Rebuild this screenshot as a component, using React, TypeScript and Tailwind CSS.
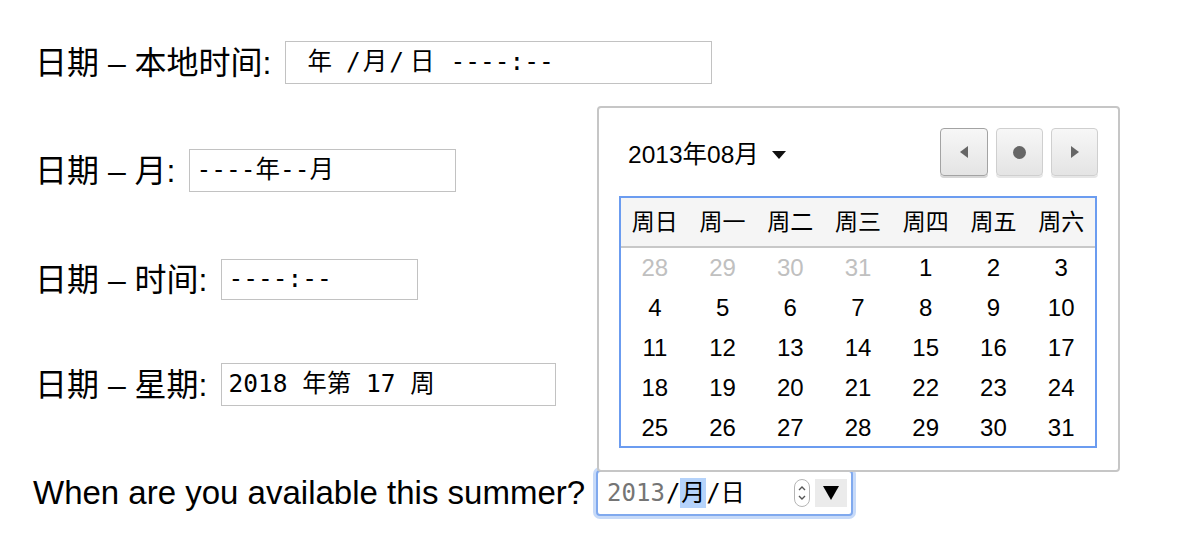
import React from 'react';

const sans = '"Liberation Sans", "Noto Sans CJK SC", sans-serif';
const mono = '"DejaVu Sans Mono", "Noto Sans CJK SC", monospace';

const weekDays = ['周日', '周一', '周二', '周三', '周四', '周五', '周六'];

const days: { n: number; muted?: boolean }[] = [
  { n: 28, muted: true },
  { n: 29, muted: true },
  { n: 30, muted: true },
  { n: 31, muted: true },
  ...Array.from({ length: 31 }, (_, i) => ({ n: i + 1 })),
];

function Field({
  className,
  children,
}: {
  className: string;
  children: React.ReactNode;
}) {
  return (
    <div
      className={`flex items-center border border-[#c2c2c2] bg-white text-[24.5px] text-black ${className}`}
      style={{ fontFamily: mono }}
    >
      {children}
    </div>
  );
}

function NavButton({
  pressed,
  children,
  className,
}: {
  pressed?: boolean;
  children: React.ReactNode;
  className: string;
}) {
  return (
    <div
      className={`flex items-center justify-center h-[48px] rounded-[4px] border bg-gradient-to-b from-[#f7f7f7] to-[#e4e4e4] ${
        pressed
          ? 'border-[#a3a3a3] shadow-[0_2px_0_#d6d6d6]'
          : 'border-[#cfcfcf] shadow-[0_2px_0_#e6e6e6]'
      } ${className}`}
    >
      {children}
    </div>
  );
}

function Calendar() {
  return (
    <div className="absolute left-[597px] top-[106px] w-[523px] h-[366px] rounded-[4px] border-2 border-[#c6c6c6] bg-white">
      <div className="flex items-center justify-between pl-[29px] pr-[20px] pt-[20px]">
        <div className="flex items-center gap-[13px] pt-[6px] text-[24.5px] text-black">
          <span>2013年08月</span>
          <svg width="14" height="8" viewBox="0 0 14 8">
            <path d="M0 0h14L7 8z" fill="#111" />
          </svg>
        </div>
        <div className="flex gap-[8px]">
          <NavButton pressed className="w-[48px]">
            <svg width="8" height="12" viewBox="0 0 8 12">
              <path d="M8 0v12L0 6z" fill="#666" />
            </svg>
          </NavButton>
          <NavButton className="w-[47px]">
            <div className="w-[13px] h-[13px] rounded-full bg-[#666]" />
          </NavButton>
          <NavButton className="w-[47px]">
            <svg width="8" height="12" viewBox="0 0 8 12">
              <path d="M0 0v12l8-6z" fill="#666" />
            </svg>
          </NavButton>
        </div>
      </div>
      <div className="ml-[20px] mt-[20px] w-[478px] h-[252px] border-2 border-[#6b9cf0]">
        <div className="grid grid-cols-7 h-[50px] bg-[#f5f5f5] border-b-2 border-[#c8c8c8] text-[23px] text-black">
          {weekDays.map((d) => (
            <div key={d} className="flex items-center justify-center">
              {d}
            </div>
          ))}
        </div>
        <div className="grid grid-cols-7 text-[24px]">
          {days.map((d, i) => (
            <div
              key={i}
              className={`flex items-center justify-center h-[40px] ${
                d.muted ? 'text-[#c0c0c0]' : 'text-black'
              }`}
            >
              {d.n}
            </div>
          ))}
        </div>
      </div>
    </div>
  );
}

export default function App() {
  return (
    <div
      className="relative w-[1192px] h-[536px] overflow-hidden bg-white text-black"
      style={{ fontFamily: sans }}
    >
      <div className="pl-[35px] pt-[41px]">
        <div className="flex items-center h-[43px]">
          <span className="text-[32px] whitespace-pre">日期 – 本地时间:</span>
          <Field className="ml-[14px] w-[427px] h-[43px] pl-[21px]">
            <span>年</span>
            <span className="ml-[14px]">/</span>
            <span className="ml-[2px]">月</span>
            <span className="ml-[2px]">/</span>
            <span className="ml-[6px]">日</span>
            <span className="ml-[16px] whitespace-pre">----:--</span>
          </Field>
        </div>

        <div className="flex items-center h-[43px] mt-[65px]">
          <span className="text-[32px] whitespace-pre">日期 – 月:</span>
          <Field className="ml-[14px] w-[267px] h-[43px] pl-[6px]">
            <span className="whitespace-pre">----年--月</span>
          </Field>
        </div>

        <div className="flex items-center h-[41px] mt-[67px]">
          <span className="text-[32px] whitespace-pre">日期 – 时间:</span>
          <Field className="ml-[14px] w-[197px] h-[41px] pl-[6px]">
            <span className="whitespace-pre">----:--</span>
          </Field>
        </div>

        <div className="flex items-center h-[43px] mt-[63px]">
          <span className="text-[32px] whitespace-pre">日期 – 星期:</span>
          <Field className="ml-[14px] w-[335px] h-[43px] pl-[6px]">
            <span className="whitespace-pre">2018 年第 17 周</span>
          </Field>
        </div>

        <div className="flex items-center h-[46px] mt-[64px] -ml-[2px]">
          <span className="text-[33px] whitespace-pre">When are you available this summer?</span>
          <div
            className="ml-[11px] flex items-center w-[257px] h-[46px] rounded-[4px] border-2 border-[#80a9ee] shadow-[0_0_0_3px_#c7daf8] bg-white pl-[9px] pr-[4px] text-[24px]"
            style={{ fontFamily: mono }}
          >
            <span className="text-[#757575]">2013</span>
            <span className="ml-[1px]">/</span>
            <span className="bg-[#b5d3fb] px-[1px] leading-[30px]">月</span>
            <span>/</span>
            <span>日</span>
            <div className="ml-auto flex items-center gap-[5px]">
              <svg width="16" height="28" viewBox="0 0 16 28">
                <rect x="0.5" y="0.5" width="15" height="27" rx="7.5" fill="#fff" stroke="#b5b5b5" />
                <path d="M5 11l3-3 3 3" fill="none" stroke="#555" strokeWidth="1.4" />
                <path d="M5 17l3 3 3-3" fill="none" stroke="#555" strokeWidth="1.4" />
              </svg>
              <div className="flex items-center justify-center w-[32px] h-[28px] bg-[#ebebeb]">
                <svg width="16" height="14" viewBox="0 0 16 14">
                  <path d="M0 0h16L8 14z" fill="#000" />
                </svg>
              </div>
            </div>
          </div>
        </div>
      </div>

      <Calendar />
    </div>
  );
}
